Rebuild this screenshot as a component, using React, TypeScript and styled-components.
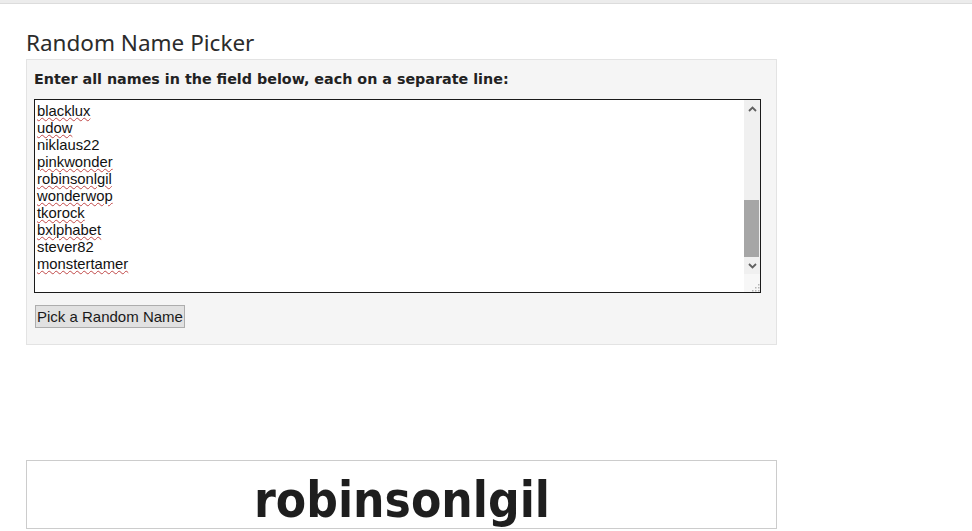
import React from "react";
import styled, { createGlobalStyle } from "styled-components";

const GlobalStyle = createGlobalStyle`
  html, body {
    margin: 0;
    padding: 0;
    background: #ffffff;
  }
`;

const TopBar = styled.div`
  height: 3px;
  background: #ececec;
  border-bottom: 1px solid #dcdcdc;
`;

const Page = styled.main`
  width: 751px;
  padding: 0 0 0 26px;
`;

const Title = styled.h1`
  margin: 24px 0 0 0;
  height: 31px;
  font-family: "Noto Sans", "Open Sans", sans-serif;
  font-weight: 400;
  font-size: 22.5px;
  line-height: 30px;
  color: #2b2b2b;
`;

const Panel = styled.section`
  box-sizing: border-box;
  height: 286px;
  background: #f5f5f5;
  border: 1px solid #e3e3e3;
  padding: 9px 15px 0 7px;
`;

const Label = styled.div`
  font-family: "DejaVu Sans", Verdana, sans-serif;
  font-weight: bold;
  font-size: 14.3px;
  line-height: 20px;
  color: #222;
`;

const NameBox = styled.div`
  box-sizing: border-box;
  display: flex;
  height: 194px;
  margin-top: 10px;
  background: #fff;
  border: 1px solid #1a1a1a;
`;

const NameList = styled.div`
  flex: 1;
  padding: 3px 2px;
  font-family: "Liberation Sans", Arial, sans-serif;
  font-size: 14.8px;
  line-height: 17px;
  color: #111;
  overflow: hidden;
`;

const Name = styled.div<{ misspelled?: boolean }>`
  text-decoration: ${(p) => (p.misspelled ? "underline wavy #c04848" : "none")};
  text-decoration-thickness: 1px;
  text-underline-offset: 1px;
`;

const ScrollColumn = styled.div`
  width: 16px;
  display: flex;
  flex-direction: column;
`;

const Track = styled.div`
  flex: 1;
  display: flex;
  flex-direction: column;
  background: #f0f0f0;
`;

const ArrowButton = styled.div`
  height: 17px;
  display: flex;
  align-items: center;
  justify-content: center;
`;

const Thumb = styled.div`
  height: 57px;
  margin: 0 1px 0 0;
  background: #a6a6a6;
`;

const Spacer = styled.div<{ grow: number }>`
  flex: ${(p) => p.grow};
`;

const Grip = styled.div`
  height: 18px;
  background: #f7f7f7;
  display: flex;
  align-items: flex-end;
  justify-content: flex-end;
`;

const PickButton = styled.button`
  display: block;
  margin-top: 12px;
  margin-left: 1px;
  height: 23px;
  padding: 0 1px;
  background: #e1e1e1;
  border: 1px solid #adadad;
  border-radius: 0;
  font-family: "Liberation Sans", Arial, sans-serif;
  font-size: 15px;
  color: #1a1a1a;
  cursor: pointer;
`;

const ResultBox = styled.div`
  box-sizing: border-box;
  margin-top: 115px;
  height: 69px;
  border: 1px solid #cccccc;
  display: flex;
  align-items: center;
  justify-content: center;
`;

const Result = styled.div`
  font-family: "DejaVu Sans Condensed", "DejaVu Sans", sans-serif;
  font-weight: bold;
  font-size: 49.2px;
  line-height: 60px;
  color: #1e1e1e;
  padding-top: 11px;
  padding-left: 1px;
`;

const names: [string, boolean][] = [
  ["blacklux", true],
  ["udow", true],
  ["niklaus22", false],
  ["pinkwonder", true],
  ["robinsonlgil", true],
  ["wonderwop", true],
  ["tkorock", true],
  ["bxlphabet", true],
  ["stever82", false],
  ["monstertamer", true],
];

function Chevron({ up }: { up?: boolean }) {
  return (
    <svg width="9" height="6" viewBox="0 0 9 6">
      <path
        d={up ? "M1 5 L4.5 1.5 L8 5" : "M1 1 L4.5 4.5 L8 1"}
        fill="none"
        stroke="#606060"
        strokeWidth="1.8"
      />
    </svg>
  );
}

export default function App() {
  return (
    <>
      <GlobalStyle />
      <TopBar />
      <Page>
        <Title>Random Name Picker</Title>
        <Panel>
          <Label>Enter all names in the field below, each on a separate line:</Label>
          <NameBox>
            <NameList>
              {names.map(([n, bad]) => (
                <Name key={n} misspelled={bad}>
                  {n}
                </Name>
              ))}
            </NameList>
            <ScrollColumn>
              <Track>
                <ArrowButton>
                  <Chevron up />
                </ArrowButton>
                <Spacer grow={1} />
                <Thumb />
                <ArrowButton>
                  <Chevron />
                </ArrowButton>
              </Track>
              <Grip>
                <svg width="8" height="8" viewBox="0 0 8 8">
                  <g fill="#b5b5b5">
                    <rect x="6" y="0" width="1.5" height="1.5" />
                    <rect x="3" y="3" width="1.5" height="1.5" />
                    <rect x="6" y="3" width="1.5" height="1.5" />
                    <rect x="0" y="6" width="1.5" height="1.5" />
                    <rect x="3" y="6" width="1.5" height="1.5" />
                    <rect x="6" y="6" width="1.5" height="1.5" />
                  </g>
                </svg>
              </Grip>
            </ScrollColumn>
          </NameBox>
          <PickButton>Pick a Random Name</PickButton>
        </Panel>
        <ResultBox>
          <Result>robinsonlgil</Result>
        </ResultBox>
      </Page>
    </>
  );
}
